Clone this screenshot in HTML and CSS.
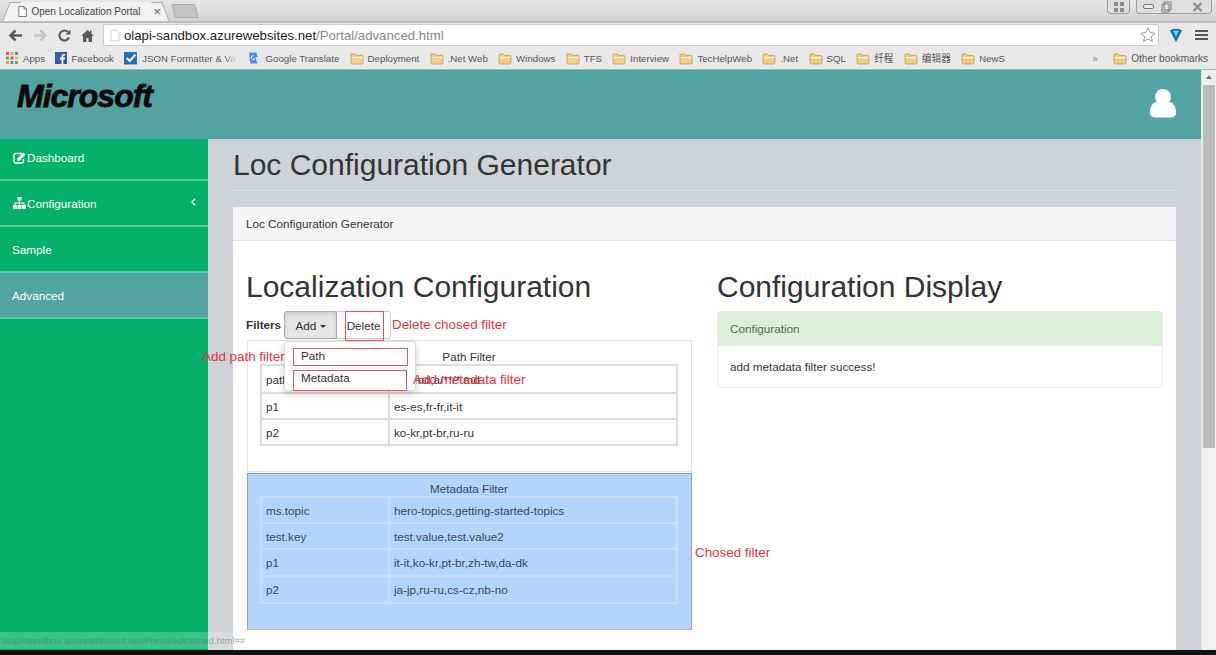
FILE: index.html
```html
<!DOCTYPE html>
<html lang="en">
<head>
<meta charset="UTF-8">
<meta name="viewport" content="width=device-width, initial-scale=1.0">
<title>Open Localization Portal</title>
<link rel="stylesheet" href="styles.css">
</head>
<body>

<svg class="defs" width="0" height="0">
  <symbol id="folder" viewBox="0 0 14 13">
    <path d="M1 3.200c0-.8.5-1.200 1.200-1.200h3l1.200 1.400h5.400c.7 0 1.200.4 1.200 1.200v6.200c0 .8-.5 1.200-1.200 1.200H2.200c-.7 0-1.200-.4-1.200-1.200z" fill="#f0cf86" stroke="#b79a57" stroke-width=".8"/>
    <path d="M1.500 5h11v1.200h-11z" fill="#fbeac0"/>
  </symbol>
</svg>

<div class="tabstrip">
  <div class="tab">
    <svg class="tab-page" width="11" height="13" viewBox="0 0 11 13"><path d="M1 .7h6l3 3v8.600H1zM7 .7v3h3" fill="#fff" stroke="#666"/></svg>
    <span class="tab-title">Open Localization Portal</span>
    <span class="tab-close">×</span>
  </div>
  <div class="newtab"></div>
  <div class="winctl">
    <div class="winbox winbox-user">
      <svg width="12" height="12" viewBox="0 0 12 12"><path d="M1 1h4v4H1zM7 1h4v4H7zM1 7h4v4H1zM7 7h4v4H7z" fill="#8b8b8b"/></svg>
    </div>
    <div class="winbox winbox-main">
      <svg width="11" height="5" viewBox="0 0 11 5"><rect x=".5" y=".5" width="10" height="4" rx="1.500" fill="#eee" stroke="#777"/></svg>
      <svg width="11" height="12" viewBox="0 0 11 12"><path d="M3 1h7v8H3zM1 3h7v8H1z" fill="#e4e4e4" stroke="#777"/></svg>
      <svg class="winclose" width="11" height="10" viewBox="0 0 11 10"><path d="M1.500 1l8 8M9.500 1l-8 8" stroke="#8a8a8a" stroke-width="2.200"/></svg>
    </div>
  </div>
</div>

<div class="toolbar">
  <svg class="navicon" width="15" height="13" viewBox="0 0 15 13"><path d="M14 6.500H3M7.500 1.500l-5 5 5 5" fill="none" stroke="#5a5a5a" stroke-width="2.600"/></svg>
  <svg class="navicon" width="15" height="13" viewBox="0 0 15 13"><path d="M1 6.500h11M7.500 1.500l5 5-5 5" fill="none" stroke="#c4c4c4" stroke-width="2.600"/></svg>
  <svg class="navicon" width="13" height="13" viewBox="0 0 13 13"><path d="M11 8.500A5 5 0 1 1 10 3" fill="none" stroke="#5a5a5a" stroke-width="2.200"/><path d="M12.500 .5v5h-5z" fill="#5a5a5a"/></svg>
  <svg class="navicon" width="13" height="13" viewBox="0 0 13 13"><path d="M6.500 1L0 7h2v6h3.500V9h2v4H11V7h2L10.500 4.700V1.500H9v1.800z" fill="#5a5a5a"/></svg>
  <div class="omnibox">
    <svg width="10" height="13" viewBox="0 0 11 13"><path d="M1 .7h6l3 3v8.600H1z" fill="#fff" stroke="#ccc"/></svg>
    <span class="url"><b>olapi-sandbox.azurewebsites.net</b>/Portal/advanced.html</span>
    <svg class="star" width="16" height="16" viewBox="0 0 16 16"><path d="M8 1l2.100 4.600 5 .6-3.700 3.400 1 4.900L8 12.100l-4.400 2.400 1-4.900L.9 6.200l5-.6z" fill="#fff" stroke="#999"/></svg>
  </div>
  <svg class="vee" width="14" height="15" viewBox="0 0 14 15"><path d="M1 2.500L4 1h6l3 1.500L7 14z" fill="#0f6fa8"/><path d="M4 2.500h6L7 9z" fill="#7fd0ee"/></svg>
  <div class="hamburger"><i></i><i></i><i></i></div>
</div>

<div class="bookmarks">
  <span class="bm bm-apps">
    <svg width="12" height="12" viewBox="0 0 12 12"><path d="M0 0h3v3H0z" fill="#d9534f"/><path d="M4.500 0h3v3h-3z" fill="#e8a33d"/><path d="M9 0h3v3H9z" fill="#4a90d9"/><path d="M0 4.500h3v3H0z" fill="#5aa85a"/><path d="M4.500 4.500h3v3h-3z" fill="#d9534f"/><path d="M9 4.500h3v3H9z" fill="#e8c33d"/><path d="M0 9h3v3H0z" fill="#e8a33d"/><path d="M4.500 9h3v3h-3z" fill="#4a90d9"/><path d="M9 9h3v3H9z" fill="#5aa85a"/></svg>
    Apps
  </span>
  <span class="bm">
    <svg width="12" height="12" viewBox="0 0 12 12"><path d="M0 0h12v12H0z" fill="#3b5998"/><path d="M8.300 12V7.400h1.500l.2-1.800H8.300V4.500c0-.5.200-.9.900-.9h1V2c-.3 0-.8-.1-1.400-.1-1.400 0-2.300.8-2.300 2.400v1.300H5v1.800h1.500V12z" fill="#fff"/></svg>
    Facebook
  </span>
  <span class="bm">
    <svg width="14" height="14" viewBox="0 0 13 13"><path d="M0 1h12v11.500H0z" fill="#1d6fb8"/><path d="M2.500 6.500l2.700 2.700L10.500 3.500" fill="none" stroke="#fff" stroke-width="2"/></svg>
    <span class="bm-fade">JSON Formatter &amp; Va</span>
  </span>
  <span class="bm">
    <svg width="13" height="15" viewBox="0 0 14 15"><path d="M0 1h8l3 12H1.500z" fill="#4a8af4"/><path d="M7 6h6.500v8H9z" fill="#dfe6f2"/><path d="M5 4.500a2.200 2.200 0 1 0 1.500 3.200H4.800" fill="none" stroke="#fff"/></svg>
    Google Translate
  </span>
  <span class="bm"><svg width="14" height="13"><use href="#folder"/></svg>Deployment</span>
  <span class="bm"><svg width="14" height="13"><use href="#folder"/></svg>.Net Web</span>
  <span class="bm"><svg width="14" height="13"><use href="#folder"/></svg>Windows</span>
  <span class="bm"><svg width="14" height="13"><use href="#folder"/></svg>TFS</span>
  <span class="bm"><svg width="14" height="13"><use href="#folder"/></svg>Interview</span>
  <span class="bm"><svg width="14" height="13"><use href="#folder"/></svg>TecHelpWeb</span>
  <span class="bm"><svg width="14" height="13"><use href="#folder"/></svg>.Net</span>
  <span class="bm"><svg width="14" height="13"><use href="#folder"/></svg>SQL</span>
  <span class="bm"><svg width="14" height="13"><use href="#folder"/></svg>纤程</span>
  <span class="bm"><svg width="14" height="13"><use href="#folder"/></svg>编辑器</span>
  <span class="bm"><svg width="14" height="13"><use href="#folder"/></svg>NewS</span>
  <span class="bm-more">»</span>
  <span class="bm bm-other"><svg width="14" height="13"><use href="#folder"/></svg>Other bookmarks</span>
</div>

<div class="app">
  <div class="topbar">
    <span class="logo">Microsoft</span>
    <svg class="usericon" width="28" height="31" viewBox="0 0 30 32"><circle cx="15" cy="9" r="8.500" fill="#fff"/><path d="M1 26c0-7 3-11 7-12 2 2 4.500 3 7 3s5-1 7-3c4 1 7 5 7 12 0 3-2 5-5 5H6c-3 0-5-2-5-5z" fill="#fff"/></svg>
  </div>
  <div class="layout">
    <div class="sidebar">
      <a class="nav-item nav-first" href="#dashboard">
        <svg class="nav-icon" width="13" height="12" viewBox="0 0 13 12"><path d="M9 1.500H2.500A1.500 1.500 0 0 0 1 3v6.500A1.500 1.500 0 0 0 2.500 11H9a1.500 1.500 0 0 0 1.500-1.500V7" fill="none" stroke="#fff" stroke-width="1.300"/><path d="M4.500 6.200L10.500.6l2 2-5.700 5.800-2.600.5z" fill="#fff"/></svg>
        Dashboard
      </a>
      <a class="nav-item" href="#configuration">
        <svg class="nav-icon" width="13" height="12" viewBox="0 0 13 12"><path d="M4.500 0h4v3.500h-4zM0 8h4v4H0zM4.500 8h4v4h-4zM9 8h4v4H9zM6 3.500h1V5.500h4.500V8h-1V6.500H7V8H6V6.500H2.500V8h-1V5.500H6z" fill="#fff"/></svg>
        Configuration
        <svg class="nav-chevron" width="5" height="8" viewBox="0 0 5 8"><path d="M4 .8L1 4l3 3.200" fill="none" stroke="#fff" stroke-width="1.300"/></svg>
      </a>
      <a class="nav-item" href="#sample">Sample</a>
      <a class="nav-item nav-active" href="#advanced">Advanced</a>
    </div>
    <div class="main">
      <h1 class="page-title">Loc Configuration Generator</h1>
      <div class="panel">
        <div class="panel-heading">Loc Configuration Generator</div>
        <div class="panel-body">
          <div class="col col-left">
            <h2>Localization Configuration</h2>
            <div class="filter-bar">
              <b>Filters</b>
              <div class="btn-group">
                <button class="btn btn-open">Add <i class="caret"></i></button>
                <button class="btn btn-plain">Delete</button>
              </div>
            </div>
            <div class="filter-box">
              <div class="filter-title">Path Filter</div>
              <table class="filter-table">
                <tr><td>path</td><td>**/*.md,a/**/*.md</td></tr>
                <tr><td>p1</td><td>es-es,fr-fr,it-it</td></tr>
                <tr><td>p2</td><td>ko-kr,pt-br,ru-ru</td></tr>
              </table>
            </div>
            <div class="filter-box filter-chosen">
              <div class="filter-title">Metadata Filter</div>
              <table class="filter-table">
                <tr><td>ms.topic</td><td>hero-topics,getting-started-topics</td></tr>
                <tr><td>test.key</td><td>test.value,test.value2</td></tr>
                <tr><td>p1</td><td>it-it,ko-kr,pt-br,zh-tw,da-dk</td></tr>
                <tr><td>p2</td><td>ja-jp,ru-ru,cs-cz,nb-no</td></tr>
              </table>
            </div>
            <div class="dropdown">
              <div class="dropdown-item">Path</div>
              <div class="dropdown-item">Metadata</div>
            </div>
          </div>
          <div class="col col-right">
            <h2>Configuration Display</h2>
            <div class="alert-panel">
              <div class="alert-heading">Configuration</div>
              <div class="alert-body">add metadata filter success!</div>
            </div>
          </div>
        </div>
      </div>
    </div>
    <div class="scrollbar">
      <div class="scroll-up"></div>
      <div class="scroll-thumb"></div>
    </div>
  </div>
</div>

<!-- red notes drawn over the shot -->
<span class="note note-delete">Delete chosed filter</span>
<span class="note note-path">Add path filter</span>
<span class="note note-meta">Add metadata filter</span>
<span class="note note-chosen">Chosed filter</span>
<div class="mark mark-delete"></div>
<div class="mark mark-path"></div>
<div class="mark mark-meta"></div>

<div class="statusbubble">olapi-sandbox.azurewebsites.net/Portal/advanced.html##</div>
<div class="taskbar"></div>

</body>
</html>
```

FILE: styles.css
```css
html, body {
  margin: 0;
  padding: 0;
  height: 655px;
  overflow: hidden;
}
body {
  position: relative;
  width: 1216px;
  font-family: "Liberation Sans", Arial, sans-serif;
  font-size: 11.7px;
  color: #333;
  background: #cfd3d7;
}
.defs {
  position: absolute;
}

/* browser chrome */
.tabstrip {
  height: 21px;
  display: flex;
  align-items: flex-end;
  background: linear-gradient(#e6e6e6, #d2d2d2);
  border-bottom: 2px solid #bdbdbd;
}
.tab {
  width: 143px;
  height: 19px;
  margin-left: 11px;
  padding-left: 7px;
  display: flex;
  align-items: center;
  position: relative;
  background: #f1f1f1;
  font-size: 10px;
  color: #444;
  white-space: nowrap;
}
.tab::before, .tab::after {
  content: '';
  position: absolute;
  top: 0;
  bottom: 0;
  width: 10px;
  background: #f1f1f1;
  border-top: 1px solid #aaa;
}
.tab::before {
  left: -5px;
  transform: skewX(-22deg);
  border-left: 1px solid #aaa;
}
.tab::after {
  right: -5px;
  transform: skewX(22deg);
  border-right: 1px solid #aaa;
}
.tab-page {
  margin-right: 4px;
  position: relative;
  z-index: 1;
}
.tab-title {
  position: relative;
  z-index: 1;
}
.tab-close {
  margin-left: 13px;
  position: relative;
  z-index: 1;
  font-size: 13px;
  color: #666;
}
.newtab {
  width: 22px;
  height: 12px;
  margin: 0 0 3px 12px;
  background: #c4c4c4;
  border: 1px solid #aaa;
  border-radius: 2px;
  transform: skewX(15deg);
}
.winctl {
  margin-left: auto;
  margin-right: 4px;
  align-self: flex-start;
  display: flex;
  gap: 6px;
}
.winbox {
  height: 14px;
  display: flex;
  align-items: center;
  box-sizing: border-box;
  border: 1px solid #9c9c9c;
  border-top: 0;
  border-radius: 0 0 4px 4px;
  background: #dedede;
}
.winbox-user {
  width: 23px;
  justify-content: center;
}
.winbox-main {
  width: 76px;
  padding-left: 6px;
  gap: 7px;
}
.winclose {
  margin-left: 13px;
}
.toolbar {
  height: 24px;
  display: flex;
  align-items: center;
  gap: 10px;
  padding-left: 8px;
  background: #e9e9e9;
}
.navicon {
  flex: none;
}
.omnibox {
  width: 1056px;
  height: 22px;
  margin-left: -1px;
  padding: 0 2px 0 6px;
  box-sizing: border-box;
  display: flex;
  align-items: center;
  gap: 4px;
  background: #fff;
  border: 1px solid #ccc;
  border-radius: 2px;
  font-size: 13.2px;
  color: #888;
}
.url b {
  font-weight: normal;
  color: #222;
}
.star {
  margin-left: auto;
}
.hamburger {
  width: 13px;
  margin-left: 2px;
}
.hamburger i {
  display: block;
  height: 2px;
  margin: 2px 0;
  background: #555;
}
.bookmarks {
  height: 22px;
  padding-left: 6px;
  display: flex;
  align-items: center;
  gap: 10.3px;
  background: #e9e9e9;
  font-size: 9.7px;
  color: #555;
  border-bottom: 1px solid #a9b5b3;
  font-family: "Liberation Sans", "Noto Sans CJK SC", sans-serif;
  white-space: nowrap;
}
.bm {
  display: flex;
  align-items: center;
  gap: 4px;
}
.bm svg {
  flex: none;
}
.bm-apps {
  gap: 5px;
}
.bm-fade {
  width: 96px;
  -webkit-mask-image: linear-gradient(to right, #000 85%, transparent);
  mask-image: linear-gradient(to right, #000 85%, transparent);
}
.bm-more {
  margin-left: auto;
  margin-right: 5px;
  color: #777;
}
.bm-other {
  margin-right: 8px;
  font-size: 10px;
}

/* page */
.topbar {
  height: 69px;
  width: 1201px;
  position: relative;
  background: #53a3a3;
}
.logo {
  position: absolute;
  left: 17px;
  top: 8px;
  font-size: 32px;
  font-weight: bold;
  font-style: italic;
  letter-spacing: -1px;
  color: #0a0a0a;
  -webkit-text-stroke: .8px #0a0a0a;
}
.usericon {
  position: absolute;
  left: 1149px;
  top: 18px;
}
.layout {
  display: flex;
  height: 516px;
}
.sidebar {
  width: 208px;
  flex: none;
  background: #05b06d;
}
.nav-item {
  height: 44px;
  padding-left: 12px;
  display: flex;
  align-items: center;
  position: relative;
  color: #fff;
  text-decoration: none;
  border-bottom: 2px solid #5cc9a0;
}
.nav-first {
  height: 37px;
  padding-bottom: 3px;
}
.nav-icon {
  margin: 0 1px;
}
.nav-active {
  background: #53a3a3;
  padding-top: 1px;
  height: 43px;
}
.nav-chevron {
  position: absolute;
  right: 12px;
  top: 17px;
}
.main {
  flex: 1;
  padding: 0 25px;
  overflow: hidden;
}
.page-title {
  margin: 0 0 16px;
  padding: 7px 0;
  font-size: 30px;
  line-height: 37px;
  font-weight: normal;
  border-bottom: 1px solid #dde0e3;
}
.panel {
  background: #fff;
  border-radius: 3px 3px 0 0;
  height: 460px;
}
.panel-heading {
  height: 33px;
  line-height: 33px;
  padding-left: 13px;
  background: #f5f5f5;
  border-bottom: 1px solid #e2e2e2;
}
.panel-body {
  display: flex;
  gap: 25px;
  padding: 0 13px;
}
.col {
  width: 446px;
  flex: none;
  position: relative;
}
.col h2 {
  margin: 27px 0 0;
  font-size: 30px;
  line-height: 37px;
  font-weight: normal;
}
.filter-bar {
  height: 29px;
  margin-top: 6px;
  display: flex;
  align-items: flex-start;
  gap: 3px;
}
.filter-bar b {
  line-height: 27px;
}
.btn-group {
  display: flex;
}
.btn {
  height: 28px;
  padding: 0 10px;
  font: inherit;
  color: #333;
  background: #fff;
  border: 1px solid #ccc;
}
.btn-open {
  width: 53px;
  padding: 0;
  background: #e6e6e6;
  border-color: #adadad;
  border-radius: 3px 0 0 3px;
  box-shadow: inset 0 2px 4px rgba(0,0,0,.12);
}
.btn-plain {
  width: 54px;
  padding: 0;
  border-left: 0;
  border-radius: 0 3px 3px 0;
}
.caret {
  display: inline-block;
  vertical-align: middle;
  border-top: 3.5px solid #333;
  border-left: 3.5px solid transparent;
  border-right: 3.5px solid transparent;
}
.filter-box {
  margin-left: 1px;
  height: 132px;
  box-sizing: border-box;
  padding: 0 13px 0 12px;
  border: 1px solid #e4e4e4;
}
.filter-chosen {
  height: 157px;
  margin-top: 1px;
  background: #b3d4fc;
  border: 1px solid #9a9fc0;
  border-top-color: #8b93b3;
  border-bottom-color: #c9a6b8;
  color: #3a4654;
}
.filter-title {
  height: 23px;
  line-height: 32px;
  text-align: center;
}
.filter-chosen .filter-title {
  height: 22px;
  line-height: 30px;
}
.filter-table {
  width: 100%;
  border-collapse: collapse;
}
.filter-table td {
  height: 24px;
  padding: 0 4px;
  border: 2px solid #dcdcdc;
}
.filter-table tr:first-child td {
  height: 26px;
}
.filter-chosen .filter-table td,
.filter-chosen .filter-table tr:first-child td {
  border-color: #c9dcf2;
  height: 24px;
}
.filter-chosen .filter-table tr:nth-child(n+3) td {
  height: 25px;
}
.filter-table td:first-child {
  width: 118px;
}
.dropdown {
  position: absolute;
  left: 38px;
  top: 100px;
  width: 132px;
  height: 50px;
  box-sizing: border-box;
  padding-top: 3px;
  background: #fff;
  border: 1px solid #ddd;
  border-radius: 3px;
  box-shadow: 0 3px 8px rgba(0,0,0,.18);
}
.dropdown-item {
  height: 22px;
  line-height: 22px;
  padding-left: 16px;
}
.alert-panel {
  margin-top: 6px;
  border: 1px solid #e9efdf;
  border-radius: 3px;
}
.alert-heading {
  height: 34px;
  line-height: 34px;
  padding-left: 12px;
  background: #dff0d8;
  color: #3c763d;
}
.alert-body {
  height: 41px;
  line-height: 41px;
  padding-left: 12px;
}
.scrollbar {
  width: 15px;
  flex: none;
  background: #f1f1f1;
  margin-top: -69px;
  height: 585px;
  border-left: 1px solid #e4e4e4;
  box-sizing: border-box;
}
.scroll-up {
  height: 15px;
  position: relative;
}
.scroll-up::after {
  content: '';
  position: absolute;
  left: 4px;
  top: 5px;
  border-bottom: 4px solid #777;
  border-left: 3px solid transparent;
  border-right: 3px solid transparent;
}
.scroll-thumb {
  height: 363px;
  margin: 0 1px;
  background: #bdbdbd;
}

/* notes over the shot */
.note {
  position: absolute;
  font-size: 13.4px;
  line-height: 16px;
  color: #e8333c;
  white-space: nowrap;
}
.note-delete { left: 392px; top: 317px; }
.note-path { left: 202px; top: 349px; }
.note-meta { left: 413px; top: 372px; }
.note-chosen { left: 695px; top: 545px; }
.mark {
  position: absolute;
  box-sizing: border-box;
  border: 1px solid #e8505a;
}
.mark-delete { left: 345px; top: 311px; width: 39px; height: 30px; }
.mark-path { left: 293px; top: 348px; width: 115px; height: 18px; }
.mark-meta { left: 293px; top: 370px; width: 114px; height: 21px; }
.statusbubble {
  position: absolute;
  left: 0;
  top: 632px;
  width: 404px;
  height: 17px;
  line-height: 17px;
  padding-left: 2px;
  box-sizing: border-box;
  font-size: 9.6px;
  color: rgba(90, 120, 105, .6);
  background: rgba(255,255,255,.22);
}
.taskbar {
  position: absolute;
  left: 0;
  right: 0;
  top: 650px;
  height: 5px;
  background: #111;
}
```
